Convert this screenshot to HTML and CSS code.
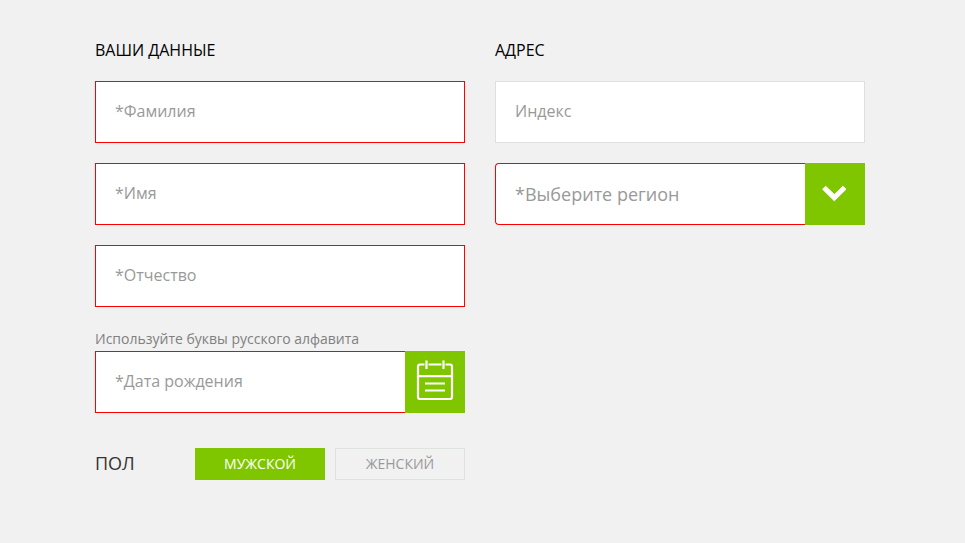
FILE: index.html
```html
<!DOCTYPE html>
<html lang="ru">
<head>
<meta charset="utf-8">
<meta name="viewport" content="width=device-width, initial-scale=1">
<title>Ваши данные</title>
<link rel="stylesheet" href="styles.css">
</head>
<body>
<form class="form">
  <section class="column">
    <h2 class="title">Ваши данные</h2>
    <input class="field required" type="text" aria-label="Фамилия" placeholder="*Фамилия">
    <input class="field required" type="text" aria-label="Имя" placeholder="*Имя">
    <input class="field required" type="text" aria-label="Отчество" aria-describedby="hint" placeholder="*Отчество">
    <p class="hint" id="hint">Используйте буквы русского алфавита</p>
    <div class="combo">
      <input class="field required" type="text" aria-label="Дата рождения" placeholder="*Дата рождения">
      <button class="addon" type="button" aria-label="Открыть календарь">
        <svg width="60" height="62" viewBox="0 0 60 62" fill="none" stroke="#fff" stroke-width="2.2">
          <path d="M19.5 13.5H15.2Q13 13.5 13 15.7V45.7Q13 48 15.2 48H44.8Q47 48 47 45.7V15.7Q47 13.5 44.8 13.5H40.5M23.5 13.5H36.5M13 25.2H47"/>
          <path d="M21.5 9.5V18M38.5 9.5V18M20 32.5H40M20 39.5H40"/>
        </svg>
      </button>
    </div>
    <fieldset class="gender" aria-labelledby="gender">
      <span class="gender-title" id="gender">Пол</span>
      <label class="option"><input class="radio" type="radio" name="gender" checked>Мужской</label>
      <label class="option"><input class="radio" type="radio" name="gender">Женский</label>
    </fieldset>
  </section>
  <section class="column">
    <h2 class="title">Адрес</h2>
    <input class="field" type="text" aria-label="Индекс" placeholder="Индекс">
    <div class="combo">
      <select class="field required region" aria-label="Регион">
        <option>*Выберите регион</option>
      </select>
      <span class="addon arrow">
        <svg width="60" height="62" viewBox="0 0 60 62" fill="#fff" stroke="#fff" stroke-width="1" stroke-linejoin="round">
          <path d="M17.6 26.2L20.7 23.3L29.3 31.5L37.9 23.3L41 26.2L29.3 37.8Z"/>
        </svg>
      </span>
    </div>
  </section>
</form>
</body>
</html>
```
FILE: styles.css
```css
* {
  box-sizing: border-box;
}

body {
  margin: 0;
  background: #f1f1f1;
  font-family: "Open Sans", sans-serif;
  font-size: 16px;
  color: #000;
}

.form {
  display: grid;
  grid-template-columns: 1fr 1fr;
  gap: 30px;
  padding: 40px 100px 60px 95px;
}

.column {
  display: flex;
  flex-direction: column;
  gap: 20px;
  min-width: 0;
}

.title {
  margin: 0;
  font-size: 16px;
  line-height: 21px;
  font-weight: 400;
  text-transform: uppercase;
}

.field {
  width: 100%;
  min-width: 0;
  height: 62px;
  padding: 0 19px 2px;
  border: 1px solid #dde1de;
  border-radius: 0;
  background: #fff;
  color: #999;
  font: inherit;
}

.field::placeholder {
  color: #999;
  opacity: 1;
}

.required {
  border-color: #f00;
}

.hint {
  margin: 0 0 -20px;
  font-size: 14px;
  line-height: 24px;
  color: #808080;
}

.combo {
  display: flex;
}

.combo .field {
  flex: 1;
  border-right: 0;
}

.region {
  appearance: none;
  padding-bottom: 0;
  border-radius: 4px 0 0 4px;
  font-size: 18px;
}

.addon {
  flex: none;
  width: 60px;
  height: 62px;
  padding: 0;
  border: 0;
  background: #7fc600;
}

.addon svg {
  display: block;
}

.arrow {
  pointer-events: none;
}

.gender {
  display: grid;
  grid-template-columns: 90px 1fr 1fr;
  gap: 10px;
  min-width: 0;
  margin: 15px 0 0;
  padding: 0;
  border: 0;
}

.gender-title {
  font-size: 18px;
  line-height: 30px;
  color: #333;
  text-transform: uppercase;
}

.option {
  position: relative;
  height: 32px;
  border: 1px solid #dde3de;
  font-size: 14px;
  line-height: 30px;
  text-align: center;
  text-transform: uppercase;
  color: #999;
}

.option:has(:checked) {
  border-color: #7fc600;
  background: #7fc600;
  color: #fff;
}

.radio {
  position: absolute;
  inset: 0;
  margin: 0;
  appearance: none;
}
```
